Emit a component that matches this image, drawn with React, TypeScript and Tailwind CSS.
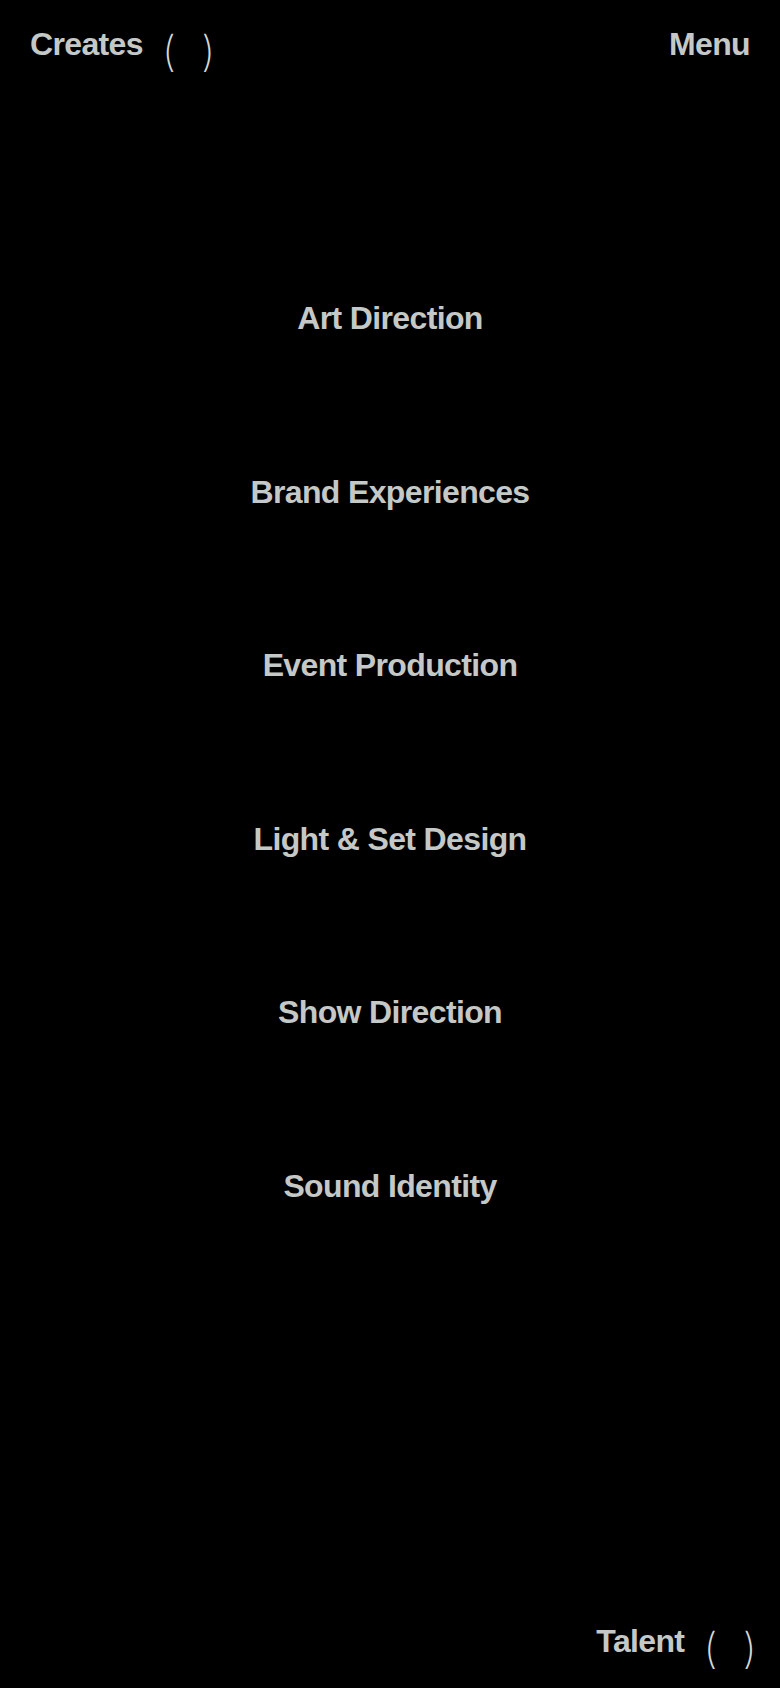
const services = [
  "Art Direction",
  "Brand Experiences",
  "Event Production",
  "Light & Set Design",
  "Show Direction",
  "Sound Identity",
];

function Parens() {
  return (
    <span className="flex gap-[26px] font-['Inter','DejaVu_Sans',sans-serif] text-[42px] font-extralight leading-none mt-[2px] text-[#d4d7d6]">
      <span>(</span>
      <span>)</span>
    </span>
  );
}

export default function App() {
  return (
    <div className="min-h-[1688px] bg-black text-[#c4c8c7] flex flex-col font-['Liberation_Sans','Arial',sans-serif] font-bold tracking-[-0.04em]">
      <header className="flex justify-between items-start px-[30px] pt-[28px]">
        <div className="flex items-start gap-[19px]">
          <span className="text-[32px] leading-none">Creates</span>
          <Parens />
        </div>
        <button className="text-[32px] leading-none">Menu</button>
      </header>

      <ul className="flex flex-col items-center gap-[141.5px] mt-[230px]">
        {services.map((s) => (
          <li key={s} className="text-[32px] leading-none">
            {s}
          </li>
        ))}
      </ul>

      <footer className="mt-auto flex justify-end pr-[24px] pb-[19px]">
        <div className="flex items-start gap-[19px]">
          <span className="text-[32px] leading-none">Talent</span>
          <Parens />
        </div>
      </footer>
    </div>
  );
}
